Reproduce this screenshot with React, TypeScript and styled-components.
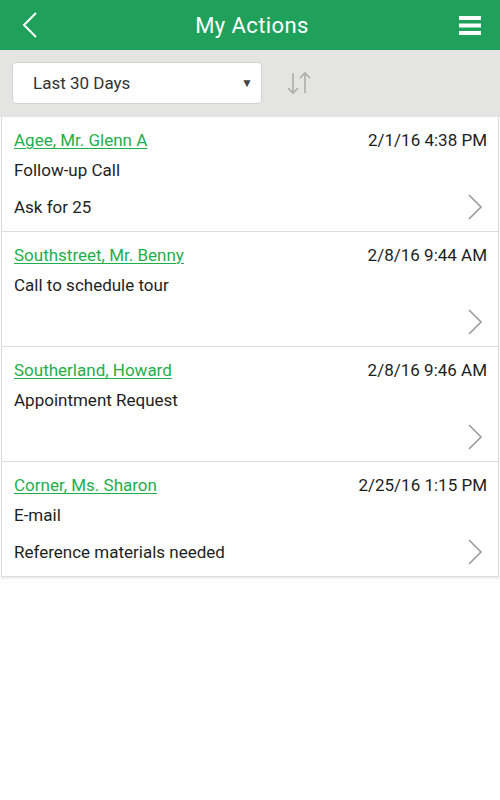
import styled, { createGlobalStyle } from "styled-components";

const GlobalStyle = createGlobalStyle`
  html, body {
    margin: 0;
    padding: 0;
    background: #ffffff;
    font-family: Roboto, "Noto Sans", Arial, sans-serif;
  }
`;

const Screen = styled.div`
  width: 500px;
  min-height: 800px;
  background: #ffffff;
`;

const Header = styled.header`
  height: 50px;
  background: #1fa15b;
  display: flex;
  align-items: center;
  justify-content: space-between;
  padding: 0 18px 0 22px;
  box-sizing: border-box;
  color: #ffffff;
`;

const Title = styled.h1`
  margin: 0;
  font-size: 22px;
  font-weight: 400;
  letter-spacing: 0.4px;
`;

const IconButton = styled.button<{ $align?: string }>`
  width: 24px;
  height: 30px;
  padding: 0;
  border: none;
  background: transparent;
  display: flex;
  align-items: center;
  justify-content: ${({ $align }) => $align ?? "center"};
`;

const Toolbar = styled.div`
  background: #e4e4e2;
  padding: 12px 12px 13px;
  display: flex;
  align-items: center;
  gap: 25px;
`;

const Select = styled.div`
  width: 250px;
  height: 42px;
  box-sizing: border-box;
  background: #ffffff;
  border: 1px solid #d2d2d0;
  border-radius: 4px;
  display: flex;
  align-items: center;
  justify-content: space-between;
  padding: 0 8px 0 20px;
  font-size: 17px;
  color: #333333;
`;

const Caret = styled.span`
  font-size: 12px;
  color: #444444;
`;

const List = styled.div`
  margin: 0 1px;
  border: 1px solid #dcdcdc;
  border-top: none;
  box-shadow: 0 2px 1px rgba(0, 0, 0, 0.06);
`;

const Card = styled.div`
  padding: 11px 11px 11px 12px;
  border-bottom: 1px solid #dcdcdc;
  display: flex;
  flex-direction: column;
  &:last-child {
    border-bottom: none;
  }
`;

const Row = styled.div<{ $gap?: number; $height?: number }>`
  display: flex;
  align-items: center;
  justify-content: space-between;
  height: ${({ $height }) => $height ?? 24}px;
  margin-top: ${({ $gap }) => $gap ?? 0}px;
  font-size: 17px;
  color: #1e1e1e;
`;

const Name = styled.a`
  color: #1fae4b;
  text-decoration: underline;
  text-underline-offset: 2px;
  text-decoration-thickness: 1px;
`;

const DateText = styled.span`
  color: #1e1e1e;
`;

type Action = {
  name: string;
  date: string;
  subject: string;
  note: string;
};

const actions: Action[] = [
  { name: "Agee, Mr. Glenn A", date: "2/1/16 4:38 PM", subject: "Follow-up Call", note: "Ask for 25" },
  { name: "Southstreet, Mr. Benny", date: "2/8/16 9:44 AM", subject: "Call to schedule tour", note: "" },
  { name: "Southerland, Howard", date: "2/8/16 9:46 AM", subject: "Appointment Request", note: "" },
  { name: "Corner, Ms. Sharon", date: "2/25/16 1:15 PM", subject: "E-mail", note: "Reference materials needed" },
];

function Chevron() {
  return (
    <svg width="16" height="26" viewBox="0 0 16 26" style={{ marginRight: 4 }}>
      <polyline points="2,1 14,13 2,25" fill="none" stroke="#9a9a9a" strokeWidth="1.6" />
    </svg>
  );
}

export default function App() {
  return (
    <Screen>
      <GlobalStyle />
      <Header>
        <IconButton aria-label="Back" $align="flex-start">
          <svg width="16" height="26" viewBox="0 0 16 26">
            <polyline points="14,1 2,13 14,25" fill="none" stroke="#ffffff" strokeWidth="2" />
          </svg>
        </IconButton>
        <Title>My Actions</Title>
        <IconButton aria-label="Menu">
          <svg width="22" height="19" viewBox="0 0 22 19">
            <rect x="0" y="0" width="22" height="4" fill="#ffffff" />
            <rect x="0" y="7.5" width="22" height="4" fill="#ffffff" />
            <rect x="0" y="15" width="22" height="4" fill="#ffffff" />
          </svg>
        </IconButton>
      </Header>
      <Toolbar>
        <Select>
          <span>Last 30 Days</span>
          <Caret>▼</Caret>
        </Select>
        <svg width="24" height="24" viewBox="0 0 24 24">
          <g fill="none" stroke="#acacac" strokeWidth="1.6">
            <line x1="6" y1="2" x2="6" y2="22" />
            <polyline points="1,17 6,22 11,17" />
            <line x1="18" y1="2" x2="18" y2="22" />
            <polyline points="13,7 18,2 23,7" />
          </g>
        </svg>
      </Toolbar>
      <List>
        {actions.map((a) => (
          <Card key={a.name}>
            <Row>
              <Name href="#">{a.name}</Name>
              <DateText>{a.date}</DateText>
            </Row>
            <Row $gap={6}>{a.subject}</Row>
            <Row $gap={12} $height={26}>
              <span>{a.note}</span>
              <Chevron />
            </Row>
          </Card>
        ))}
      </List>
    </Screen>
  );
}
